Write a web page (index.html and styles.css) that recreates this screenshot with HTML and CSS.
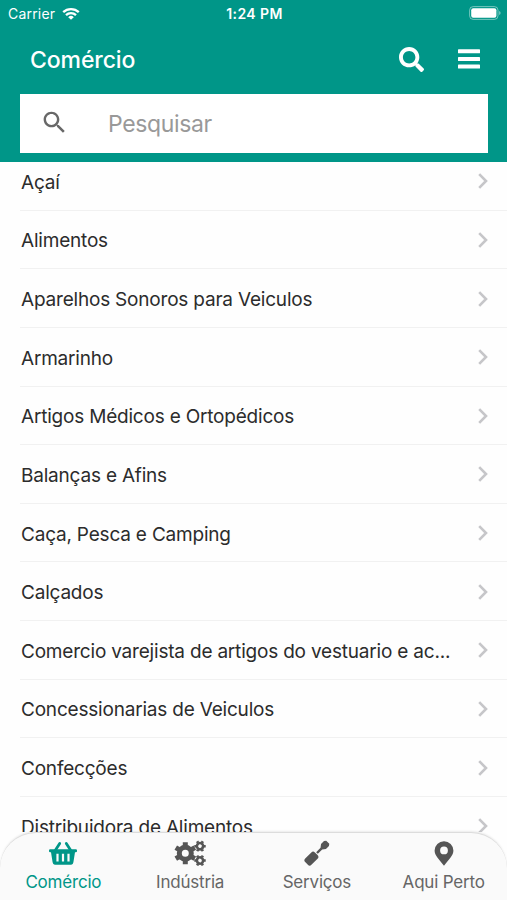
FILE: index.html
```html
<!DOCTYPE html>
<html lang="pt-BR">
<head>
    <meta charset="UTF-8">
    <meta name="viewport" content="width=device-width, initial-scale=1.0">
    <title>Comércio</title>
    <link rel="stylesheet" href="styles.css">
</head>
<body>
    <header class="header">
        <div class="status-bar">
            <div class="carrier">
                <span>Carrier</span>
                <svg class="wifi" viewBox="0 0 18 13" fill="none" stroke="#fff" stroke-width="2.3">
                    <path d="M1.2 5.2a11.2 11.2 0 0 1 15.6 0"/>
                    <path d="M4 8.2a7.2 7.2 0 0 1 10 0"/>
                    <path d="M9 12.8L6.2 10.2a4 4 0 0 1 5.6 0z" fill="#fff" stroke="none"/>
                </svg>
            </div>
            <span class="clock">1:24 PM</span>
            <svg class="battery" viewBox="0 0 32 14">
                <rect x=".6" y=".6" width="28.4" height="12.8" rx="3.6" fill="none" stroke="#fff" stroke-opacity=".45"/>
                <rect x="2.2" y="2.2" width="25.2" height="9.6" rx="2" fill="#fff"/>
                <path d="M30.3 5v4q1.2-.7 1.2-2t-1.2-2z" fill="#fff" fill-opacity=".6"/>
            </svg>
        </div>
        <div class="toolbar">
            <h1>Comércio</h1>
            <svg class="icon-search" viewBox="0 0 512 512" fill="#fff">
                <path d="M505 442.7L405.3 343c-4.5-4.5-10.6-7-17-7H372c27.6-35.3 44-79.7 44-128C416 93.1 322.9 0 208 0S0 93.1 0 208s93.1 208 208 208c48.3 0 92.7-16.4 128-44v16.3c0 6.4 2.5 12.5 7 17l99.7 99.7c9.4 9.4 24.6 9.4 33.9 0l28.3-28.3c9.4-9.4 9.4-24.6.1-34zM208 336c-70.7 0-128-57.2-128-128 0-70.7 57.2-128 128-128 70.7 0 128 57.2 128 128 0 70.7-57.2 128-128 128z"/>
            </svg>
            <svg class="icon-menu" viewBox="0 0 22 20" fill="#fff">
                <rect y=".3" width="22" height="4" rx=".6"/>
                <rect y="8" width="22" height="4" rx=".6"/>
                <rect y="15.6" width="22" height="4" rx=".6"/>
            </svg>
        </div>
        <div class="search-box">
            <svg class="icon-lupa" viewBox="0 0 24 24" fill="#686868">
                <path d="M15.5 14h-.79l-.28-.27C15.41 12.59 16 11.11 16 9.5 16 5.91 13.09 3 9.5 3S3 5.91 3 9.5 5.91 16 9.5 16c1.61 0 3.09-.59 4.23-1.57l.27.28v.79l5 4.99L20.49 19l-4.99-5zm-6 0C7.01 14 5 11.99 5 9.5S7.01 5 9.5 5 14 7.01 14 9.5 11.99 14 9.5 14z"/>
            </svg>
            <input type="text" placeholder="Pesquisar">
        </div>
    </header>

    <svg width="0" height="0" class="sprite">
        <symbol id="chevron" viewBox="0 0 10 16">
            <path d="M1.2 1.2L8 8l-6.8 6.8" fill="none" stroke="#c6c6c9" stroke-width="2.6"/>
        </symbol>
    </svg>

    <main class="content">
        <ul class="list">
            <li><span>Açaí</span><svg><use href="#chevron"/></svg></li>
            <li><span>Alimentos</span><svg><use href="#chevron"/></svg></li>
            <li><span>Aparelhos Sonoros para Veiculos</span><svg><use href="#chevron"/></svg></li>
            <li><span>Armarinho</span><svg><use href="#chevron"/></svg></li>
            <li><span>Artigos Médicos e Ortopédicos</span><svg><use href="#chevron"/></svg></li>
            <li><span>Balanças e Afins</span><svg><use href="#chevron"/></svg></li>
            <li><span>Caça, Pesca e Camping</span><svg><use href="#chevron"/></svg></li>
            <li><span>Calçados</span><svg><use href="#chevron"/></svg></li>
            <li><span>Comercio varejista de artigos do vestuario e ac...</span><svg><use href="#chevron"/></svg></li>
            <li><span>Concessionarias de Veiculos</span><svg><use href="#chevron"/></svg></li>
            <li><span>Confecções</span><svg><use href="#chevron"/></svg></li>
            <li><span>Distribuidora de Alimentos</span><svg><use href="#chevron"/></svg></li>
        </ul>
    </main>

    <nav class="tabs">
        <a class="tab active">
            <svg viewBox="0 0 32 26">
                <path d="M8.5 10l4.2-6.600M23.500 10l-4.200-6.600" fill="none" stroke="currentColor" stroke-width="2.8" stroke-linecap="round"/>
                <path fill="currentColor" fill-rule="evenodd" d="M3.2 9.200h25.6q1.200 0 1.200 1.200v.8q0 1.100-1.200 1.100h-.8l-1.600 10q-.3 2.400-2.200 2.400h-16.400q-1.900 0-2.200-2.400l-1.600-10h-.8q-1.200 0-1.200-1.100v-.8q0-1.200 1.200-1.200zM9.400 13.800v7.600h2.200v-7.600zM14.900 13.800v7.600h2.200v-7.600zM20.400 13.800v7.600h2.200v-7.600z"/>
            </svg>
            <span>Comércio</span>
        </a>
        <a class="tab">
            <svg viewBox="0 0 32 26">
                <defs>
                    <g id="gear" fill="none" stroke="currentColor">
                        <circle r="6" stroke-width="5"/>
                        <path d="M0-7.500V-11M0 7.500V11M6.500-3.750L9.530-5.500M-6.500 3.750L-9.530 5.500M6.500 3.750L9.530 5.500M-6.500-3.750L-9.530-5.500" stroke-width="5"/>
                    </g>
                </defs>
                <use href="#gear" transform="translate(11.300 13.200)"/>
                <use href="#gear" transform="translate(26 6.200) rotate(30) scale(.52)"/>
                <use href="#gear" transform="translate(26 20.500) rotate(30) scale(.52)"/>
            </svg>
            <span>Indústria</span>
        </a>
        <a class="tab">
            <svg viewBox="0 0 32 26">
                <g transform="translate(16 13) rotate(45)" fill="currentColor">
                    <path d="M-2.200-15.200h4.400l1.300 1.800v4.200l-2.300 3v6.200h-2.400v-6.200l-2.300-3v-4.200z"/>
                    <rect x="-4.400" y="1.100" width="8.800" height="13.700" rx="2.500"/>
                </g>
            </svg>
            <span>Serviços</span>
        </a>
        <a class="tab">
            <svg viewBox="0 0 32 26">
                <path fill="currentColor" fill-rule="evenodd" d="M16 1.200a9.400 9.400 0 0 0-9.400 9.400c0 5 3.800 7.800 9.400 15.200 5.600-7.400 9.400-10.200 9.400-15.200a9.400 9.400 0 0 0-9.400-9.400zM16 6.500a3.900 3.900 0 1 1 0 7.800a3.900 3.900 0 0 1 0-7.800z"/>
            </svg>
            <span>Aqui Perto</span>
        </a>
    </nav>
</body>
</html>
```
FILE: styles.css
```css
* {
    box-sizing: border-box;
}
body {
    margin: 0;
    height: 900px;
    display: flex;
    flex-direction: column;
    overflow: hidden;
    font-family: Inter, "Liberation Sans", sans-serif;
    background-color: #fefefe;
    color: #2c2c2c;
}
svg {
    display: block;
    flex-shrink: 0;
}
.sprite {
    display: none;
}
.header {
    flex: 0 0 162px;
    background-color: #009688;
    color: #fff;
}
.status-bar {
    display: grid;
    grid-template-columns: 1fr auto 1fr;
    align-items: center;
    height: 27px;
    padding: 0 6px 0 8px;
    font-size: 14px;
}
.carrier {
    display: flex;
    align-items: center;
    gap: 7px;
    letter-spacing: 0.2px;
}
.wifi {
    width: 18px;
    height: 13px;
}
.clock {
    font-size: 14px;
    font-weight: 600;
    letter-spacing: 0.4px;
}
.battery {
    width: 32px;
    height: 14px;
    justify-self: end;
    margin-top: -1px;
}
.toolbar {
    display: flex;
    align-items: center;
    height: 66px;
    padding: 0 27px 0 30px;
}
.toolbar h1 {
    flex: 1;
    margin: 0;
    font-size: 23px;
    font-weight: 500;
    letter-spacing: -0.1px;
}
.icon-search {
    width: 25px;
    height: 25px;
    margin: -2px 34px 0 0;
}
.icon-menu {
    width: 22px;
    height: 20px;
    margin-top: -2px;
}
.search-box {
    display: flex;
    align-items: center;
    height: 59px;
    margin: 1px 19px 0 20px;
    padding-left: 20px;
    background-color: #fff;
}
.icon-lupa {
    width: 29px;
    height: 29px;
    margin-top: -2px;
}
.search-box input {
    flex: 1;
    min-width: 0;
    margin-left: 37px;
    padding: 2px;
    border: none;
    outline: none;
    background: none;
    font-family: inherit;
    font-size: 23px;
    letter-spacing: -0.35px;
}
.search-box input::placeholder {
    color: #999;
}
/* the list is scrolled a little under the header */
.content {
    flex: 1;
    min-height: 0;
    overflow: hidden;
}
.list {
    list-style: none;
    margin: -10px 0 0;
    padding: 0 0 0 20px;
}
.list li {
    display: flex;
    align-items: center;
    justify-content: space-between;
    height: 58.64px;
    padding: 3px 19px 0 1px;
    border-bottom: 1px solid #f1f1f1;
    font-size: 19px;
    letter-spacing: -0.2px;
    white-space: nowrap;
}
.list svg {
    width: 10px;
    height: 16px;
    margin-top: -2px;
}
.tabs {
    display: flex;
    flex: 0 0 68px;
    position: relative;
    background-color: #fafafa;
    border-top: 1px solid #dcdcdc;
    border-radius: 36px 36px 0 0;
    box-shadow: 0 -1px 2px rgba(0, 0, 0, 0.08);
}
.tab {
    flex: 1;
    display: flex;
    flex-direction: column;
    align-items: center;
    padding-top: 7px;
    color: #555;
    font-size: 17px;
    letter-spacing: -0.2px;
}
.tab svg {
    width: 32px;
    height: 26px;
}
.tab span {
    margin-top: 5px;
    line-height: 22px;
    color: #666;
}
.tab.active,
.tab.active span {
    color: #009688;
}
```
